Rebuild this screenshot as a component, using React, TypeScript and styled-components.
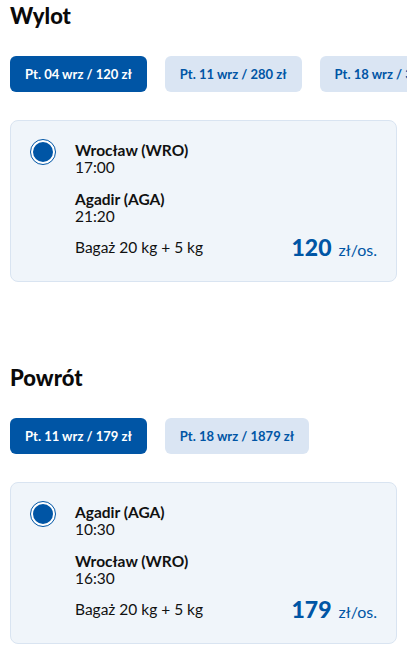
import React, { useState } from 'react';
import styled, { createGlobalStyle } from 'styled-components';

type Flight = {
  from: string;
  departure: string;
  to: string;
  arrival: string;
  baggage: string;
  price: number;
};

type Leg = {
  title: string;
  dates: string[];
  flight: Flight;
};

const legs: Leg[] = [
  {
    title: 'Wylot',
    dates: ['Pt. 04 wrz / 120 zł', 'Pt. 11 wrz / 280 zł', 'Pt. 18 wrz / 310 zł'],
    flight: {
      from: 'Wrocław (WRO)',
      departure: '17:00',
      to: 'Agadir (AGA)',
      arrival: '21:20',
      baggage: 'Bagaż 20 kg + 5 kg',
      price: 120,
    },
  },
  {
    title: 'Powrót',
    dates: ['Pt. 11 wrz / 179 zł', 'Pt. 18 wrz / 1879 zł'],
    flight: {
      from: 'Agadir (AGA)',
      departure: '10:30',
      to: 'Wrocław (WRO)',
      arrival: '16:30',
      baggage: 'Bagaż 20 kg + 5 kg',
      price: 179,
    },
  },
];

const LegSection: React.FC<{ leg: Leg }> = ({ leg }) => {
  const [active, setActive] = useState(0);
  const { flight } = leg;

  return (
    <Section>
      <Heading>{leg.title}</Heading>
      <DateTabs>
        {leg.dates.map((date, i) => (
          <DateTab key={date} $active={i === active} onClick={() => setActive(i)}>
            {date}
          </DateTab>
        ))}
      </DateTabs>
      <FlightCard>
        <Radio>
          <RadioDot />
        </Radio>
        <Details>
          <Stop>
            <City>{flight.from}</City>
            <Time>{flight.departure}</Time>
          </Stop>
          <Stop>
            <City>{flight.to}</City>
            <Time>{flight.arrival}</Time>
          </Stop>
          <Footer>
            <Baggage>{flight.baggage}</Baggage>
            <Price>
              <Amount>{flight.price}</Amount>
              <Unit>zł/os.</Unit>
            </Price>
          </Footer>
        </Details>
      </FlightCard>
    </Section>
  );
};

const App: React.FC = () => {
  return (
    <>
      <GlobalStyle />
      <Page>
        {legs.map((leg) => (
          <LegSection key={leg.title} leg={leg} />
        ))}
      </Page>
    </>
  );
};

const GlobalStyle = createGlobalStyle`
  html, body {
    margin: 0;
    padding: 0;
    background: #fff;
  }
  body {
    font-family: Lato, 'Liberation Sans', sans-serif;
    color: #111;
  }
`;

const Page = styled.div`
  padding: 0 10px;
  overflow: hidden;
`;

const Section = styled.section`
  margin-bottom: 80px;
`;

const Heading = styled.h2`
  margin: 0;
  font-size: 22px;
  line-height: 31px;
  font-weight: 900;
  color: #0a0a0a;
`;

const DateTabs = styled.div`
  display: flex;
  gap: 18px;
  margin-top: 25px;
  white-space: nowrap;
`;

const DateTab = styled.button<{ $active: boolean }>`
  flex: none;
  height: 36px;
  padding: 0 15px;
  border: none;
  border-radius: 6px;
  font-family: inherit;
  font-size: 13px;
  font-weight: 700;
  cursor: pointer;
  background: ${(p) => (p.$active ? '#0055a5' : '#dae5f3')};
  color: ${(p) => (p.$active ? '#fff' : '#0055a5')};
`;

const FlightCard = styled.div`
  display: flex;
  align-items: flex-start;
  gap: 19px;
  margin-top: 28px;
  padding: 21px 19px 20px;
  background: #f0f5fa;
  border: 1px solid #d9e4f1;
  border-radius: 8px;
`;

const Radio = styled.span`
  flex: none;
  box-sizing: border-box;
  width: 26px;
  height: 26px;
  margin-top: -3px;
  padding: 2px;
  border: 1px solid #0055a5;
  border-radius: 50%;
  background: #fff;
`;

const RadioDot = styled.span`
  display: block;
  width: 100%;
  height: 100%;
  border-radius: 50%;
  background: #0055a5;
`;

const Details = styled.div`
  flex: 1;
  font-size: 15.5px;
  line-height: 17px;
`;

const Stop = styled.div`
  & + & {
    margin-top: 15px;
  }
`;

const City = styled.div`
  font-weight: 700;
`;

const Time = styled.div`
  font-weight: 400;
`;

const Footer = styled.div`
  display: flex;
  align-items: center;
  justify-content: space-between;
  margin-top: 8px;
`;

const Baggage = styled.span``;

const Price = styled.span`
  display: flex;
  align-items: baseline;
  gap: 7px;
  color: #0055a5;
`;

const Amount = styled.span`
  font-size: 23px;
  line-height: normal;
  font-weight: 900;
`;

const Unit = styled.span`
  font-size: 16px;
`;

export default App;
